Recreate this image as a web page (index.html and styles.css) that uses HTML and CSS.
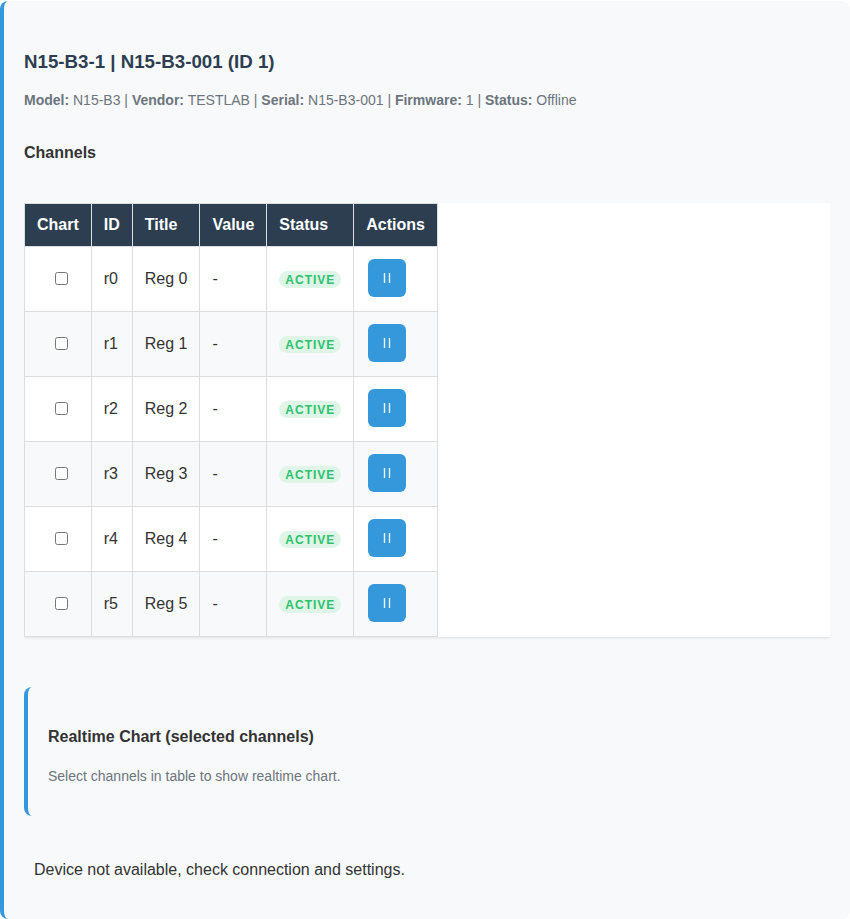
FILE: index.html
```html
<!DOCTYPE html>
<html lang="en">
<head>
    <meta charset="UTF-8">
    <meta name="viewport" content="width=device-width, initial-scale=1.0">
    <title>N15-B3-1 | N15-B3-001</title>
    <link rel="stylesheet" href="styles.css">
</head>
<body>
    <div class="device-card">
        <h3 class="device-title">N15-B3-1 | N15-B3-001 (ID 1)</h3>
        <p class="device-meta">
            <strong>Model:</strong> N15-B3 |
            <strong>Vendor:</strong> TESTLAB |
            <strong>Serial:</strong> N15-B3-001 |
            <strong>Firmware:</strong> 1 |
            <strong>Status:</strong> Offline
        </p>

        <h4 class="section-title">Channels</h4>
        <div class="table-container">
            <table class="channels-table">
                <thead>
                    <tr>
                        <th>Chart</th>
                        <th>ID</th>
                        <th>Title</th>
                        <th>Value</th>
                        <th>Status</th>
                        <th>Actions</th>
                    </tr>
                </thead>
                <tbody id="channelRows"></tbody>
            </table>
        </div>

        <div class="chart-card">
            <h4 class="section-title">Realtime Chart (selected channels)</h4>
            <p class="chart-hint">Select channels in table to show realtime chart.</p>
        </div>

        <div class="device-message">Device not available, check connection and settings.</div>
    </div>

    <script src="script.js"></script>
</body>
</html>
```
FILE: styles.css
```css
* {
    margin: 0;
    padding: 0;
    box-sizing: border-box;
}

body {
    padding-top: 1px;
    background: #fff;
    color: #333;
    font-family: Arial, "Liberation Sans", sans-serif;
    font-size: 16px;
}

.device-card {
    padding: 49px 20px 37px;
    background: #f8f9fb;
    border-left: 4px solid #3498db;
    border-radius: 8px;
}

.device-title {
    margin-bottom: 15px;
    color: #2c3e50;
    line-height: 24px;
}

.device-meta {
    margin-bottom: 32px;
    color: #6c757d;
    font-size: 14px;
    line-height: 22px;
}

.section-title {
    font-size: 16px;
    line-height: 20px;
}

/* Channels table */
.table-container {
    margin-top: 40px;
    background: #fff;
    box-shadow: 0 1px 3px rgba(0, 0, 0, 0.1);
    clip-path: inset(0 0 -4px 0);
}

.channels-table {
    border-collapse: collapse;
}

.channels-table th,
.channels-table td {
    padding: 12px;
    border: 1px solid #ddd;
    text-align: left;
}

.channels-table th {
    background: #2c3e50;
    color: #fff;
    line-height: 18px;
}

.channels-table tbody tr:nth-child(even) {
    background: #f8f9fa;
}

.channels-table .select-cell {
    padding-left: 20px;
}

.select-cell input {
    display: block;
    margin: 0 auto 2px;
}

.status-badge {
    display: inline-block;
    padding: 3px 6px 2px;
    background: #def5e7;
    border-radius: 12px;
    color: #2dc26b;
    font-size: 12px;
    font-weight: bold;
    letter-spacing: 1px;
    line-height: 12px;
    vertical-align: middle;
}

.pause-btn {
    display: block;
    width: 38px;
    height: 38px;
    margin: 0 2px 2px;
    background: #3498db;
    border: none;
    border-radius: 6px;
    color: #fff;
    cursor: pointer;
}

.pause-btn svg {
    display: block;
    margin: 0 auto;
}

/* Chart */
.chart-card {
    margin-top: 50px;
    padding: 40px 20px 29px;
    border-left: 4px solid #3498db;
    border-radius: 8px;
}

.chart-hint {
    margin-top: 18px;
    color: #6c757d;
    font-size: 14px;
    line-height: 22px;
}

.device-message {
    margin-top: 42px;
    padding: 0 10px;
    line-height: 24px;
}
```
FILE: script.js
```js
const channels = [0, 1, 2, 3, 4, 5];

document.getElementById('channelRows').innerHTML = channels.map(n => `
    <tr>
        <td class="select-cell"><input type="checkbox" aria-label="Chart Reg ${n}"></td>
        <td>r${n}</td>
        <td>Reg ${n}</td>
        <td>-</td>
        <td><span class="status-badge">ACTIVE</span></td>
        <td>
            <button class="pause-btn" type="button" aria-label="Pause Reg ${n}">
                <svg width="10" height="10" viewBox="0 0 10 10" fill="currentColor">
                    <rect x="1.8" y="0" width="1.4" height="10" opacity="0.9"/>
                    <rect x="6.8" y="0" width="1.4" height="10" opacity="0.9"/>
                </svg>
            </button>
        </td>
    </tr>
`).join('');
```
